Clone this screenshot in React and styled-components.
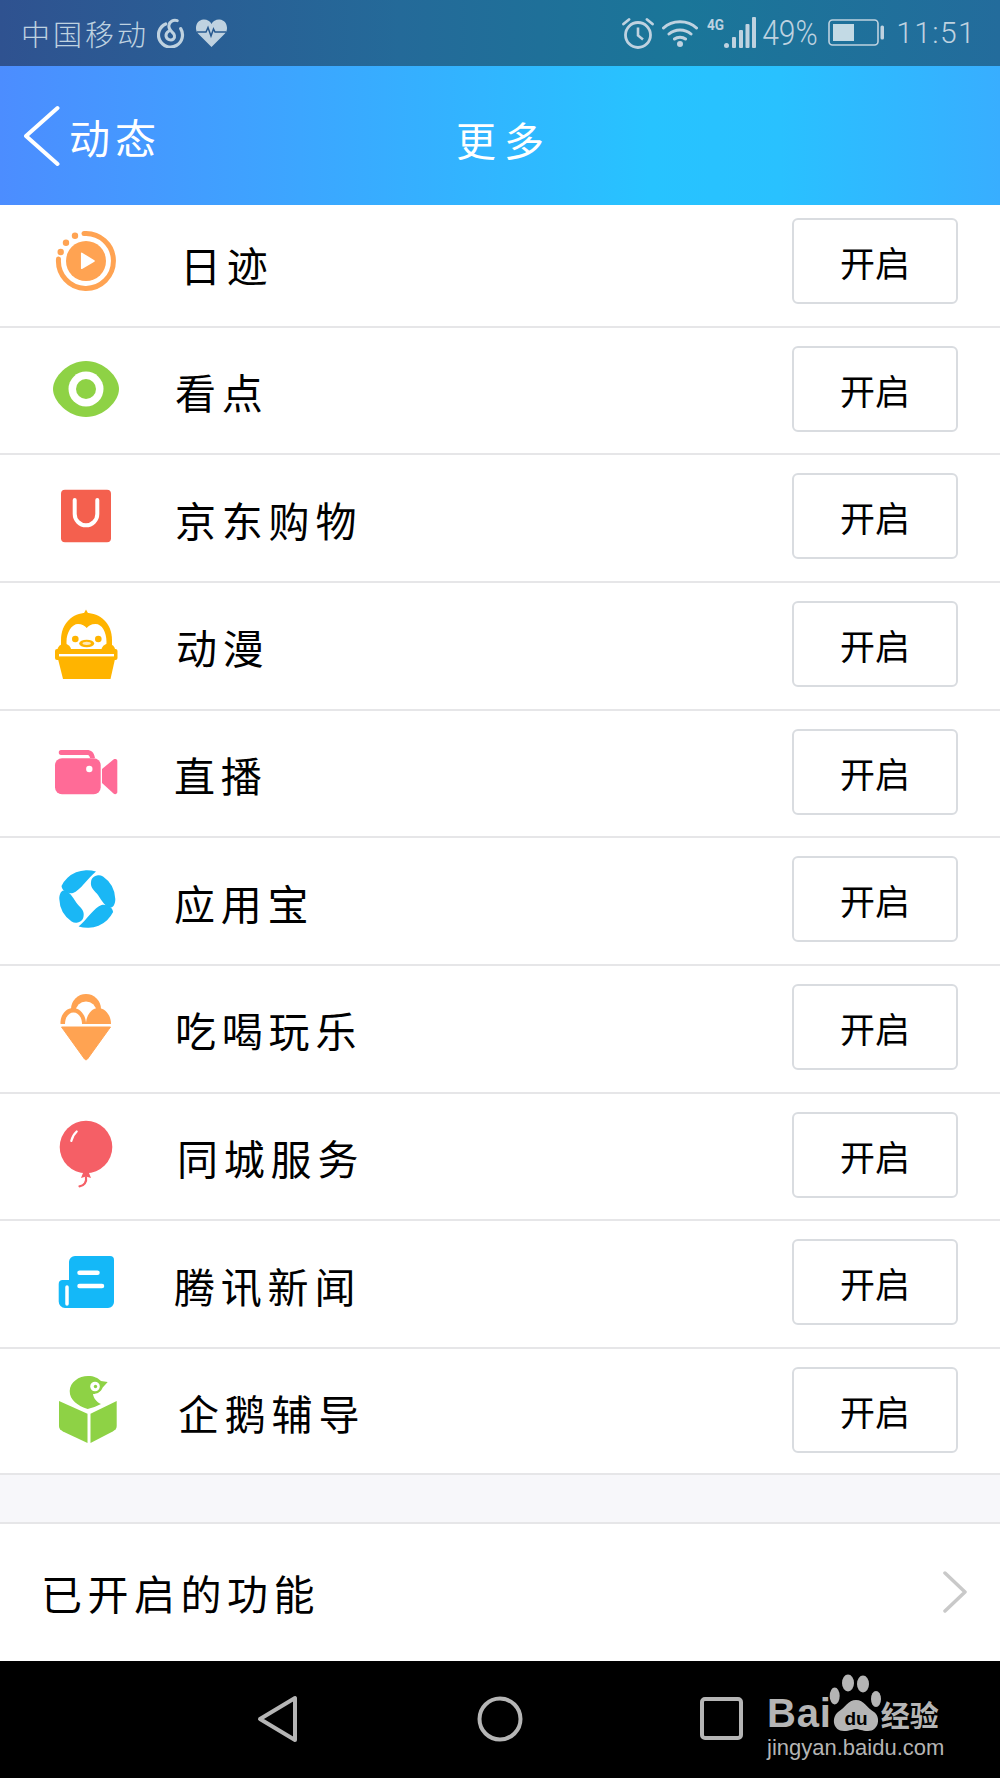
import styled, { createGlobalStyle } from "styled-components";

const GlobalStyle = createGlobalStyle`
  html, body {
    margin: 0;
    padding: 0;
    background: #fff;
  }
  * {
    box-sizing: border-box;
  }
`;

const CJK = `"Noto Sans CJK SC", "Noto Sans", sans-serif`;

const Page = styled.div`
  width: 1000px;
  height: 1778px;
  display: flex;
  flex-direction: column;
  font-family: ${CJK};
  color: #000;
`;

const StatusBar = styled.div`
  height: 66px;
  display: flex;
  align-items: center;
  justify-content: space-between;
  padding: 0 24px 0 21px;
  background: linear-gradient(90deg, #2f5290 0%, #246a99 40%, #1a7699 68%, #236c9c 100%);
  color: #bfd2e0;
`;

const StatusGroup = styled.div`
  display: flex;
  align-items: center;
`;

const Carrier = styled.span`
  font-size: 29px;
  font-weight: 300;
  line-height: 34px;
  letter-spacing: 3px;
  margin-right: 8px;
`;

const StatusIcon = styled.svg`
  display: block;
  flex: none;
  margin-left: ${(p) => p.$gap || 0}px;
`;

const Percent = styled.span`
  margin: 0 10px 0 6px;
  font-family: Roboto, sans-serif;
  font-weight: 300;
  font-size: 30px;
  line-height: 34px;
  transform: scale(1, 1.18);
  transform-origin: left center;
  width: 56px;
  white-space: nowrap;
`;

const Clock = styled.span`
  margin-left: 12px;
  font-family: Roboto, sans-serif;
  font-weight: 300;
  font-size: 30px;
  line-height: 34px;
  letter-spacing: 1.4px;
`;

const Header = styled.header`
  height: 139px;
  display: grid;
  grid-template-columns: 1fr auto 1fr;
  align-items: center;
  padding-left: 24px;
  color: #fff;
  background: linear-gradient(90deg, #4c8dff 0%, #3ca6ff 30%, #27c3ff 65%, #29c1ff 78%, #38aeff 100%);
`;

const BackLink = styled.div`
  display: flex;
  align-items: center;
  gap: 9px;
`;

const BackText = styled.span`
  font-size: 41px;
  line-height: 50px;
  letter-spacing: 5px;
`;

const Title = styled.h1`
  margin: 6px 16px 0 0;
  font-size: 40px;
  font-weight: 400;
  line-height: 50px;
  letter-spacing: 8px;
`;

const List = styled.ul`
  list-style: none;
  margin: 0;
  padding: 0;
  background: #fff;
`;

const Row = styled.li`
  display: flex;
  align-items: center;
  padding: 18px 42px 21.67px 50px;
  border-bottom: 2px solid #e6e6e8;

  &:first-child {
    padding-top: 13px;
  }

  &:last-child {
    padding-bottom: 19.67px;
  }
`;

const IconBox = styled.svg`
  display: block;
  flex: none;
  width: 72px;
  height: 72px;
`;

const RowLabel = styled.span`
  margin-left: ${(p) => p.$indent}px;
  margin-top: 5px;
  font-size: 41px;
  line-height: 50px;
  letter-spacing: 5.8px;
`;

const EnableButton = styled.button`
  margin-left: auto;
  width: 166px;
  height: 86px;
  padding: 2px 0 0;
  border: 2px solid #d9dce0;
  border-radius: 6px;
  background: #fff;
  color: #000;
  font-family: ${CJK};
  font-size: 35px;
  line-height: 40px;
`;

const Spacer = styled.div`
  flex: none;
  height: 47px;
  background: #f7f7fa;
`;

const EnabledRow = styled.div`
  flex: 1;
  display: flex;
  align-items: center;
  justify-content: space-between;
  padding: 0 33px 0 41px;
  border-top: 2px solid #e6e6e8;
  background: #fff;
`;

const EnabledText = styled.span`
  font-size: 41px;
  line-height: 50px;
  letter-spacing: 5.5px;
`;

const NavBar = styled.nav`
  position: relative;
  flex: none;
  height: 117px;
  display: flex;
  align-items: center;
  justify-content: center;
  gap: 176px;
  padding-bottom: 1px;
  background: #000;
`;

const Watermark = styled.div`
  position: absolute;
  right: 52px;
  top: 14px;
  width: 181px;
  color: #b5b5b5;
`;

const WatermarkTop = styled.div`
  display: flex;
  align-items: flex-end;
  height: 56px;
`;

const BaiText = styled.span`
  font-family: "Liberation Sans", Arial, sans-serif;
  font-weight: 700;
  font-size: 40px;
  line-height: 40px;
  margin-bottom: -2px;
  letter-spacing: 0.8px;
`;

const PawMark = styled.svg`
  display: block;
  flex: none;
  margin: 0 0 -3px -6px;
`;

const JingyanCn = styled.span`
  font-size: 29px;
  font-weight: 700;
  line-height: 34px;
  margin-left: -5px;
  white-space: nowrap;
`;

const JingyanUrl = styled.div`
  margin-top: 6px;
  font-family: "Liberation Sans", Arial, sans-serif;
  font-size: 22px;
  line-height: 22px;
  white-space: nowrap;
`;

function DiaryIcon() {
  return (
    <IconBox viewBox="0 0 72 72">
      <path d="M34 8.500A27.500 27.500 0 1 1 8.500 34" fill="none" stroke="#ffa352" strokeWidth="5" strokeLinecap="round" />
      <circle cx="25" cy="10.700" r="3.200" fill="#ffa352" />
      <circle cx="16" cy="17.700" r="3.200" fill="#ffa352" />
      <circle cx="10.700" cy="27" r="3.200" fill="#ffa352" />
      <circle cx="36" cy="36" r="20" fill="#ffa352" />
      <path d="M31.700 28.300L44 36L31.700 43.300Z" fill="#fff" stroke="#fff" strokeWidth="1.500" strokeLinejoin="round" />
    </IconBox>
  );
}

function EyeIcon() {
  return (
    <IconBox viewBox="0 0 72 72">
      <path d="M3 36C3 24 18 8 36 8C54 8 69 24 69 36C69 48 54 64 36 64C18 64 3 48 3 36Z" fill="#8ed245" />
      <circle cx="36" cy="36" r="17.500" fill="#fff" />
      <circle cx="36" cy="36" r="10" fill="#8ed245" />
    </IconBox>
  );
}

function BagIcon() {
  return (
    <IconBox viewBox="0 0 72 72">
      <rect x="11" y="9.700" width="50" height="52.600" rx="4" fill="#f4604e" />
      <path d="M24.700 20V34a11.300 11.300 0 0 0 22.600 0V20" fill="none" stroke="#fff" strokeWidth="4" strokeLinecap="round" />
    </IconBox>
  );
}

function PenguinIcon() {
  return (
    <IconBox viewBox="0 0 72 72">
      <path d="M33 7L36 1.500L39 7Z" fill="#ffb400" />
      <path d="M11 46V32C11 15 23 5 36 5C50 5 62 15 62 32V46Z" fill="#ffb400" />
      <path d="M16.500 34C16.500 24 22 16 28 16C32 16 35 18 36.700 20C38.500 18 41 16 45.500 16C52 16 56.500 24 56.500 34C56.500 40 54 42 50 42H22C18.500 42 16.500 40 16.500 34Z" fill="#fff" />
      <circle cx="25.300" cy="31" r="3.300" fill="#ffb400" />
      <circle cx="48.300" cy="31" r="3.300" fill="#ffb400" />
      <ellipse cx="36.700" cy="35.500" rx="7.500" ry="3.800" fill="#ffb400" />
      <ellipse cx="36.700" cy="35.300" rx="4.200" ry="1.600" fill="#ffe9b8" />
      <rect x="5" y="41" width="62.500" height="11" rx="2" fill="#ffb400" />
      <circle cx="14.300" cy="42.700" r="7" fill="#ffb400" />
      <circle cx="58.300" cy="42.700" r="7" fill="#ffb400" />
      <rect x="9" y="46" width="55" height="2.400" fill="#fff" />
      <path d="M8 51H65L60.500 71H13Z" fill="#ffb400" />
    </IconBox>
  );
}

function CameraIcon() {
  return (
    <IconBox viewBox="0 0 72 72">
      <path d="M11 14H37C41 14 44 16 45 22L40 22C39.500 19.500 38.500 19 37 19H11C8 19 8 14 11 14Z" fill="#ff6b97" />
      <rect x="5" y="22.300" width="45.700" height="36" rx="7" fill="#ff6b97" />
      <path d="M52 33L63.500 23.500C65 22.500 67.300 23 67.300 25V56C67.300 58 65 58.800 63.500 57.500L52 47Z" fill="#ff6b97" />
      <circle cx="39.300" cy="33" r="3.200" fill="#fff" />
    </IconBox>
  );
}

function SwirlIcon() {
  const top = "M46 8.600A28.500 28.500 0 0 0 11.500 23C12 28 18 31 23 30C30 28 38 15 46 8.600Z";
  const side = "M47 12.500C49 12 51 12.300 53 13.500A28.500 28.500 0 0 1 65.300 36C65.300 40 64 44 61 44.500C56 45 52 38 48 32C45 28 40 25 41 19C41.500 15 44 13 47 12.500Z";
  return (
    <IconBox viewBox="0 0 72 72">
      <path d={top} fill="#1ab7f5" />
      <path d={side} fill="#1ab7f5" />
      <path d={top} fill="#1ab7f5" transform="rotate(180 37.300 36)" />
      <path d={side} fill="#1ab7f5" transform="rotate(180 37.300 36)" />
    </IconBox>
  );
}

function IceCreamIcon() {
  return (
    <IconBox viewBox="0 0 72 72">
      <circle cx="36" cy="18" r="15" fill="#ffa352" />
      <circle cx="36" cy="21" r="10.500" fill="#fff" />
      <path d="M36 33C36 24 42 17 48 17C55 17 61 24 61 33Z" fill="#ffa352" />
      <path d="M10.500 33C10 24 16 17 23 17C30 17 36 24 36 33Z" fill="#ffa352" />
      <path d="M15 33C15 26 19 21.500 23.500 21.500C28 21.500 32 26 32 33Z" fill="#fff" />
      <rect x="8" y="33" width="56" height="2.700" fill="#fff" />
      <path d="M11.500 36H60.500L37.500 68C36.800 69 35.200 69 34.500 68Z" fill="#ffa352" stroke="#ffa352" strokeWidth="1" strokeLinejoin="round" />
    </IconBox>
  );
}

function BalloonIcon() {
  return (
    <IconBox viewBox="0 0 72 72">
      <circle cx="36" cy="28" r="26.300" fill="#f55f66" />
      <path d="M33 54H39L41 59L36 57.500L31 59Z" fill="#f55f66" />
      <path d="M36 58C37 63 34 67 29.500 67.300" fill="none" stroke="#f55f66" strokeWidth="2.200" strokeLinecap="round" />
      <path d="M26.700 12.500C24 15 22 18.500 21.300 22" fill="none" stroke="#fff" strokeWidth="2.200" strokeLinecap="round" />
    </IconBox>
  );
}

function NewsIcon() {
  return (
    <IconBox viewBox="0 0 72 72">
      <path d="M25 10H60A4 4 0 0 1 64 14V56A6 6 0 0 1 58 62H15A6.500 6.500 0 0 1 8.700 55.500V38A4 4 0 0 1 12.700 34H19V16A6 6 0 0 1 25 10Z" fill="#14b8f8" />
      <path d="M17 41V58" fill="none" stroke="#fff" strokeWidth="3.500" strokeLinecap="round" />
      <path d="M29.500 26.700H47.500M29.500 40H52" fill="none" stroke="#fff" strokeWidth="4.500" strokeLinecap="round" />
    </IconBox>
  );
}

function BookIcon() {
  return (
    <IconBox viewBox="0 0 72 72">
      <path d="M37.700 35C28 32 19.500 26 19.700 17C20 8 29 2 38 2C44 2 48 4 51 7L57.700 8L52.700 13.500C51 18 47 20 43 20C43.500 24 46.500 28 51 30C47 32 42 34 37.700 35Z" fill="#8ed245" />
      <circle cx="45" cy="12.500" r="4.800" fill="#fff" />
      <circle cx="45.500" cy="12.500" r="1.700" fill="#8ed245" />
      <path d="M9 27L37.500 39.700V69L13 57.500C10.500 56 9 54.500 9 52Z" fill="#8ed245" />
      <path d="M66.700 27L40.500 39.700V69L62.700 57.500C65.200 56 66.700 54.500 66.700 52Z" fill="#8ed245" />
    </IconBox>
  );
}

const ROWS = [
  { label: "日迹", indent: 58, Icon: DiaryIcon },
  { label: "看点", indent: 53, Icon: EyeIcon },
  { label: "京东购物", indent: 53, Icon: BagIcon },
  { label: "动漫", indent: 54, Icon: PenguinIcon },
  { label: "直播", indent: 52, Icon: CameraIcon },
  { label: "应用宝", indent: 52, Icon: SwirlIcon },
  { label: "吃喝玩乐", indent: 53, Icon: IceCreamIcon },
  { label: "同城服务", indent: 55, Icon: BalloonIcon },
  { label: "腾讯新闻", indent: 52, Icon: NewsIcon },
  { label: "企鹅辅导", indent: 56, Icon: BookIcon },
];

function App() {
  return (
    <Page>
      <GlobalStyle />
      <StatusBar>
        <StatusGroup>
          <Carrier>中国移动</Carrier>
          <StatusIcon width="28" height="30" viewBox="0 0 28 30">
            <path d="M8.700 6A12 12 0 1 0 23.700 10.700" fill="none" stroke="currentColor" strokeWidth="3.200" strokeLinecap="round" />
            <path d="M20.300 2.600C16 1.500 12.700 3.500 12 7C11.300 10 13 12 15 14C17.500 16 18.500 19 16.500 21C14 23 9.500 21.500 9 18C8.800 15.500 10 14 12 13" fill="none" stroke="currentColor" strokeWidth="3" strokeLinecap="round" />
          </StatusIcon>
          <StatusIcon $gap={10} width="33" height="30" viewBox="0 0 33 30">
            <path d="M16.500 29L3 15.500C-1 11 1 2 8.500 1.500C12 1.300 15 3 16.500 6C18 3 21 1.300 24.500 1.500C32 2 34 11 30 15.500Z" fill="currentColor" />
            <path d="M2 14H11L13 9.500L16 18L18.500 11L20 14H31" fill="none" stroke="#27598f" strokeWidth="1.500" />
          </StatusIcon>
        </StatusGroup>
        <StatusGroup>
          <StatusIcon width="32" height="32" viewBox="0 0 32 32">
            <circle cx="16" cy="18" r="12.500" fill="none" stroke="currentColor" strokeWidth="2.800" />
            <path d="M16 10.500V18.500L21 22.500" fill="none" stroke="currentColor" strokeWidth="2.600" />
            <path d="M1.500 7L7 2.500M30.500 7L25 2.500" fill="none" stroke="currentColor" strokeWidth="2.800" strokeLinecap="round" />
          </StatusIcon>
          <StatusIcon $gap={8} width="36" height="30" viewBox="0 0 36 30">
            <path d="M1.500 10C10 1.500 26 1.500 34.500 10M7 16C13 10.500 23 10.500 29 16M12.500 21C15.500 18.500 20.500 18.500 23.500 21" fill="none" stroke="currentColor" strokeWidth="3" strokeLinecap="round" />
            <circle cx="18" cy="26" r="3" fill="currentColor" />
          </StatusIcon>
          <StatusIcon $gap={9} width="49" height="32" viewBox="0 0 49 32">
            <text x="0" y="13" fontFamily="Roboto, sans-serif" fontWeight="700" fontSize="14" textLength="17" lengthAdjust="spacingAndGlyphs" fill="currentColor">4G</text>
            <circle cx="19.500" cy="28.500" r="2.500" fill="currentColor" />
            <rect x="25" y="20" width="4" height="11" rx="1" fill="currentColor" />
            <rect x="32" y="13" width="4" height="18" rx="1" fill="currentColor" />
            <rect x="38.500" y="7" width="4" height="24" rx="1" fill="currentColor" />
            <rect x="45" y="0" width="4" height="31" rx="1" fill="currentColor" />
          </StatusIcon>
          <Percent>49%</Percent>
          <StatusIcon width="56" height="28" viewBox="0 0 56 28">
            <rect x="1" y="1" width="49" height="25" rx="3.500" fill="none" stroke="currentColor" strokeWidth="1.600" />
            <rect x="5" y="5" width="21" height="17" fill="#c3dae5" />
            <rect x="52.500" y="6.500" width="3.500" height="14" rx="1.500" fill="currentColor" />
          </StatusIcon>
          <Clock>11:51</Clock>
        </StatusGroup>
      </StatusBar>

      <Header>
        <BackLink>
          <svg width="36" height="62" viewBox="0 0 36 62">
            <path d="M33.500 3L2 31L33.500 59" fill="none" stroke="#fff" strokeWidth="4" strokeLinecap="round" strokeLinejoin="round" />
          </svg>
          <BackText>动态</BackText>
        </BackLink>
        <Title>更多</Title>
      </Header>

      <List>
        {ROWS.map(({ label, indent, Icon }) => (
          <Row key={label}>
            <Icon />
            <RowLabel $indent={indent}>{label}</RowLabel>
            <EnableButton>开启</EnableButton>
          </Row>
        ))}
      </List>

      <Spacer />

      <EnabledRow>
        <EnabledText>已开启的功能</EnabledText>
        <svg width="24" height="42" viewBox="0 0 24 42">
          <path d="M2 2L22 21L2 40" fill="none" stroke="#c9c9c9" strokeWidth="3.500" strokeLinecap="round" strokeLinejoin="round" />
        </svg>
      </EnabledRow>

      <NavBar>
        <svg width="46" height="48" viewBox="0 0 46 48">
          <path d="M40 3V45L5 24Z" fill="none" stroke="#b5b5b5" strokeWidth="4" strokeLinejoin="round" />
        </svg>
        <svg width="46" height="48" viewBox="0 0 46 48">
          <circle cx="23" cy="24" r="20.500" fill="none" stroke="#b5b5b5" strokeWidth="4" />
        </svg>
        <svg width="46" height="48" viewBox="0 0 46 48">
          <rect x="3" y="4" width="39" height="39" rx="3" fill="none" stroke="#b5b5b5" strokeWidth="4" />
        </svg>
        <Watermark>
          <WatermarkTop>
            <BaiText>Bai</BaiText>
            <PawMark width="60" height="60" viewBox="0 0 60 60">
              <ellipse cx="8.700" cy="22" rx="5" ry="8.500" fill="#b5b5b5" />
              <ellipse cx="22" cy="9" rx="6" ry="8.500" fill="#b5b5b5" />
              <ellipse cx="37" cy="10" rx="6" ry="8.500" fill="#b5b5b5" />
              <ellipse cx="50" cy="25" rx="5" ry="8" fill="#b5b5b5" />
              <path d="M30 26C38 26 41 34 48 38C55 43 53 57 42 57C36 57 33 55 30 55C27 55 24 57 18 57C7 57 5 44 12 38C19 34 22 26 30 26Z" fill="#b5b5b5" />
              <text x="30" y="51" textAnchor="middle" fontFamily="Liberation Sans, sans-serif" fontWeight="700" fontSize="19" fill="#000">du</text>
            </PawMark>
            <JingyanCn>经验</JingyanCn>
          </WatermarkTop>
          <JingyanUrl>jingyan.baidu.com</JingyanUrl>
        </Watermark>
      </NavBar>
    </Page>
  );
}

export default App;
